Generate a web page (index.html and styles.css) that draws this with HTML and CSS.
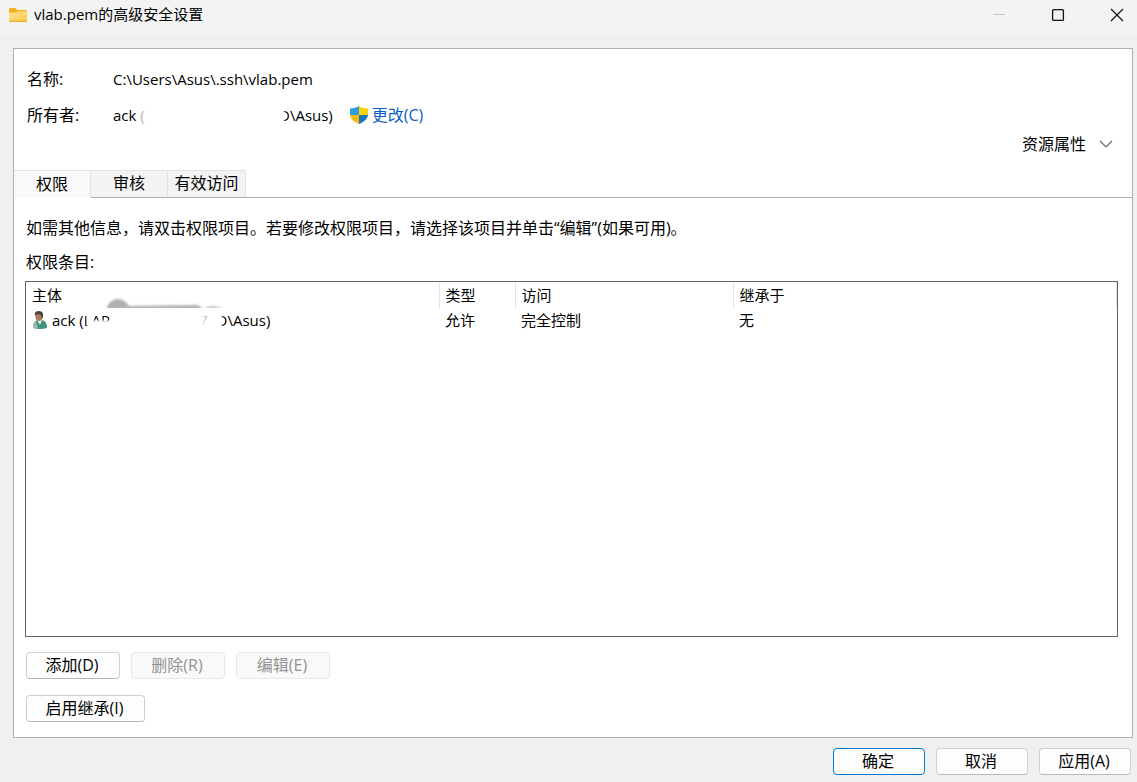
FILE: index.html
```html
<!DOCTYPE html>
<html lang="zh-CN">
<head>
<meta charset="utf-8">
<title>vlab.pem的高级安全设置</title>
<link rel="stylesheet" href="styles.css">
</head>
<body>
<div class="window">
  <header class="titlebar">
    <svg class="folder" viewBox="0 0 18 14" aria-hidden="true">
      <defs><linearGradient id="fold" x1="0" y1="0" x2="1" y2="1"><stop offset="0" stop-color="#ffe499"/><stop offset="1" stop-color="#ffc93f"/></linearGradient></defs>
      <path d="M0 1.500Q0 0 1.500 0H5.500Q6.300 0 7 .7L8.300 2H16.500Q18 2 18 3.500V12H0Z" fill="#f5b11b"/>
      <path d="M0 4.500H6.200Q7 4.500 7.600 3.900L8.500 3.200H17Q18 3.200 18 4.200V12.500Q18 14 16.500 14H1.500Q0 14 0 12.500Z" fill="url(#fold)"/>
      <path d="M.3 13.300H17.700" stroke="#eaa91d"/>
    </svg>
    <h1 class="title">vlab.pem的高级安全设置</h1>
    <div class="controls">
      <button class="control" aria-label="最小化" disabled><svg viewBox="0 0 14 14"><path d="M1 6.500H13" stroke="#c4c4c4"/></svg></button>
      <button class="control" aria-label="最大化"><svg viewBox="0 0 14 14"><rect x="1.600" y="1.600" width="10.800" height="10.800" rx="1" fill="none" stroke="#111" stroke-width="1.300"/></svg></button>
      <button class="control" aria-label="关闭"><svg viewBox="0 0 14 14"><path d="M1 1L13 13M13 1L1 13" stroke="#111" stroke-width="1.200"/></svg></button>
    </div>
  </header>

  <main class="panel">
    <dl class="info">
      <dt>名称:</dt>
      <dd>C:\Users\Asus\.ssh\vlab.pem</dd>
      <dt>所有者:</dt>
      <dd class="owner">
        <span class="owner-name">ack <span class="faded">(</span></span>
        <span class="half">D</span><span>\Asus)</span>
        <a class="change" href="#"><svg class="shield" viewBox="0 0 18 18" aria-hidden="true">
          <path d="M9 0C7 1.700 4 2.400 0 2.400V9H9Z" fill="#2b9fe0"/>
          <path d="M9 0C11 1.700 14 2.400 18 2.400V9H9Z" fill="#fdd20b"/>
          <path d="M0 9H9V18C4 15.800 .5 13 0 9Z" fill="#fdb913"/>
          <path d="M18 9H9V18C14 15.800 17.500 13 18 9Z" fill="#1878bd"/>
        </svg>更改(C)</a>
      </dd>
    </dl>
    <button class="attributes">资源属性<svg viewBox="0 0 14 8" aria-hidden="true"><path d="M1 1L7 7L13 1" fill="none" stroke="#666" stroke-width="1.200"/></svg></button>

    <div class="tabs" role="tablist">
      <button class="tab active" role="tab" aria-selected="true">权限</button>
      <button class="tab" role="tab" aria-selected="false">审核</button>
      <button class="tab" role="tab" aria-selected="false">有效访问</button>
    </div>

    <section class="page">
      <p class="hint">如需其他信息，请双击权限项目。若要修改权限项目，请选择该项目并单击“编辑”(如果可用)。</p>
      <p class="caption" id="entries">权限条目:</p>
      <div class="list">
        <table class="entries" aria-labelledby="entries">
          <colgroup><col class="col-subject"><col class="col-type"><col class="col-access"><col></colgroup>
          <thead><tr><th>主体</th><th>类型</th><th>访问</th><th>继承于</th></tr></thead>
          <tbody><tr>
            <td><div class="subject">
              <svg class="person" viewBox="0 0 16 18" aria-hidden="true">
                <path d="M1 17C1 12 3 9 7 9H9C13 9 15 12 15 17Q8 19 1 17Z" fill="#41947a"/>
                <path d="M1 17C.8 13 2.200 11 4 10L6 17.800Q3 17.800 1 17Z" fill="#9bb9b2"/>
                <path d="M5 9L8 14L10 9Z" fill="#f0eee4"/>
                <ellipse cx="7" cy="5.500" rx="3.600" ry="4.500" fill="#ab7960"/>
                <path d="M3 5Q2 0 7 0Q12 0 11 6L9.500 7.500Q10 3 6.500 3Q4 3 3 5Z" fill="#49413b"/>
              </svg>
              <span class="subject-name">ack (<span class="stem">L</span><span class="tops">AP</span></span>
              <span class="seven">7</span><span class="half">D</span><span>\Asus)</span>
            </div></td>
            <td>允许</td><td>完全控制</td><td>无</td>
          </tr></tbody>
        </table>
        <svg class="smudge" viewBox="0 0 130 11" aria-hidden="true">
          <defs><filter id="soft" x="-10%" y="-50%" width="120%" height="200%"><feGaussianBlur stdDeviation="1"/></filter></defs>
          <g filter="url(#soft)"><ellipse cx="14" cy="12" rx="11" ry="10" fill="#b0b0b0"/><path d="M20 9L88 8Q96 7 99 13H20Z" fill="#b4b4b4"/><ellipse cx="109" cy="13" rx="9" ry="4" fill="#ccc"/></g>
        </svg>
      </div>
      <div class="actions">
        <button class="btn">添加(D)</button>
        <button class="btn" disabled>删除(R)</button>
        <button class="btn" disabled>编辑(E)</button>
      </div>
      <div class="actions"><button class="btn wide">启用继承(I)</button></div>
    </section>
  </main>

  <footer class="footer">
    <button class="btn primary">确定</button>
    <button class="btn">取消</button>
    <button class="btn">应用(A)</button>
  </footer>
</div>
</body>
</html>
```
FILE: styles.css
```css
* { box-sizing: border-box; }

body {
  margin: 0;
  background: #f0f0f0;
  color: #000;
  font: 15px/20px "Open Sans", "Noto Sans CJK SC", sans-serif;
}

button { font: inherit; color: inherit; padding: 0; }
h1, p, dl, dd { margin: 0; }
svg { display: block; }

.window { display: flex; flex-direction: column; min-height: 100vh; }

.titlebar {
  display: flex;
  align-items: center;
  height: 34px;
  padding: 0 0 4px 9px;
  background: #f3f3f3;
}
.folder { width: 18px; height: 14px; margin-right: 7px; }
.title { padding-bottom: 2px; font-size: 15px; font-weight: 400; }
.controls { display: flex; gap: 18px; margin-left: auto; }
.control {
  display: grid;
  place-items: center;
  width: 41px;
  height: 28px;
  border: 0;
  background: none;
}
.control svg { width: 14px; height: 14px; }

.panel {
  display: flex;
  flex: 1;
  flex-direction: column;
  margin: 14px 4px 0 13px;
  border: 1px solid #b0b0b0;
  background: #fff;
}

.info {
  display: grid;
  grid-template-columns: 86px 1fr;
  row-gap: 16px;
  padding: 20px 13px 0;
}
.info dt { font-size: 16px; }
.owner { display: flex; }
.owner-name { width: 166px; }
.faded { color: #c3b2a2; }
.half { mask-image: linear-gradient(to right, transparent 35%, #000 60%); }
.change {
  display: flex;
  align-items: center;
  gap: 4px;
  margin-left: 17px;
  color: #0a5fc4;
  font-size: 16px;
  text-decoration: none;
}
.shield { width: 18px; height: 18px; }

.attributes {
  display: flex;
  align-items: center;
  align-self: flex-end;
  gap: 13px;
  margin: 9px 19px 0 0;
  border: 0;
  background: none;
  font-size: 16px;
}
.attributes svg { width: 14px; height: 8px; }

.tabs {
  display: flex;
  margin-top: 16px;
  border-bottom: 1px solid #b0b0b0;
}
.tab {
  width: 77px;
  height: 27px;
  padding-bottom: 2px;
  border: 1px solid #e3e3e3;
  border-left: 0;
  border-bottom: 0;
  background: #f3f3f3;
  font-size: 16px;
}
.tab.active {
  height: 28px;
  margin-bottom: -1px;
  padding-bottom: 1px;
  background: #f9f9f9;
}
.tab:last-child { width: 78px; }

.page {
  display: flex;
  flex: 1;
  flex-direction: column;
  padding: 20px 14px 15px 11px;
}
.hint, .caption { padding-left: 1px; font-size: 16px; }
.caption { margin-top: 14px; }

.list {
  position: relative;
  flex: 1;
  margin-top: 9px;
  margin-bottom: 15px;
  border: 1px solid #646464;
}
.entries {
  width: 100%;
  table-layout: fixed;
  border-collapse: collapse;
}
.col-subject { width: 413px; }
.col-type { width: 76px; }
.col-access { width: 218px; }
.entries th, .entries td {
  height: 26px;
  padding: 0 6px;
  font-weight: 400;
  text-align: left;
}
.entries td { height: 24px; }
.entries th { border-right: 1px solid #e3e3e3; }
.subject { display: flex; align-items: center; }
.person { width: 16px; height: 18px; margin-right: 4px; }
.subject-name { display: flex; width: 147px; white-space: pre; }
.stem { mask-image: linear-gradient(to right, #000 25%, transparent 50%); }
.tops { mask-image: linear-gradient(#000 45%, transparent 60%); }
.seven {
  margin-right: 9px;
  color: #8fa5c0;
  mask-image: linear-gradient(to right, transparent 25%, #000);
}
.smudge {
  position: absolute;
  top: 15px;
  left: 78px;
  width: 130px;
  height: 11px;
}

.actions { display: flex; gap: 11px; padding-left: 1px; }
.actions + .actions { margin-top: 16px; }
.btn {
  width: 94px;
  height: 27px;
  padding: 0 2px 2px 0;
  border: 1px solid #cfcfcf;
  border-bottom-color: #b9b9b9;
  border-radius: 4px;
  background: #fdfdfd;
  font-size: 16px;
}
.btn:disabled {
  border-color: #e8e8e8;
  background: #f9f9f9;
  color: #929292;
}
.btn.wide { width: 119px; }
.btn.primary { border-color: #0078d4; }

.footer {
  display: flex;
  justify-content: flex-end;
  gap: 11px;
  padding: 10px 6px 7px;
}
.footer .btn { width: 92px; }
```
